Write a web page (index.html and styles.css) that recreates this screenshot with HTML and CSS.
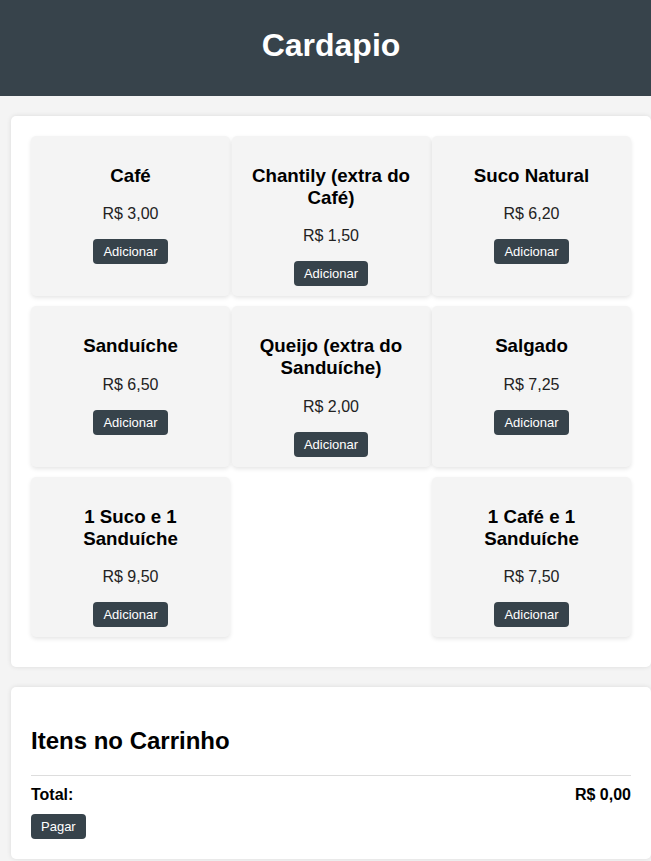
FILE: index.html
```html
<!DOCTYPE html>
<html lang="pt-BR">
<head>
<meta charset="utf-8">
<title>Cardapio</title>
<link rel="stylesheet" href="styles.css">
</head>
<body>
<div class="frame">
<header class="topbar">
  <h1 class="topbar-title">Cardapio</h1>
</header>
<main class="page">
  <section class="panel menu">
    <div class="item">
      <h3 class="item-name">Café</h3>
      <p class="item-price">R$ 3,00</p>
      <button class="btn">Adicionar</button>
    </div>
    <div class="item">
      <h3 class="item-name">Chantily (extra do Café)</h3>
      <p class="item-price">R$ 1,50</p>
      <button class="btn">Adicionar</button>
    </div>
    <div class="item">
      <h3 class="item-name">Suco Natural</h3>
      <p class="item-price">R$ 6,20</p>
      <button class="btn">Adicionar</button>
    </div>
    <div class="item">
      <h3 class="item-name">Sanduíche</h3>
      <p class="item-price">R$ 6,50</p>
      <button class="btn">Adicionar</button>
    </div>
    <div class="item">
      <h3 class="item-name">Queijo (extra do Sanduíche)</h3>
      <p class="item-price">R$ 2,00</p>
      <button class="btn">Adicionar</button>
    </div>
    <div class="item">
      <h3 class="item-name">Salgado</h3>
      <p class="item-price">R$ 7,25</p>
      <button class="btn">Adicionar</button>
    </div>
    <div class="item">
      <h3 class="item-name">1 Suco e 1 Sanduíche</h3>
      <p class="item-price">R$ 9,50</p>
      <button class="btn">Adicionar</button>
    </div>
    <div class="item">
      <h3 class="item-name">1 Café e 1 Sanduíche</h3>
      <p class="item-price">R$ 7,50</p>
      <button class="btn">Adicionar</button>
    </div>
  </section>
  <section class="panel cart">
    <h2 class="cart-title">Itens no Carrinho</h2>
    <div class="cart-total">
      <span>Total:</span>
      <span>R$ 0,00</span>
    </div>
    <button class="btn">Pagar</button>
  </section>
</main>
</div>
</body>
</html>
```
FILE: styles.css
```css
* { box-sizing: border-box; }
html, body { margin: 0; padding: 0; }
body {
  background: #f4f4f4;
  font-family: "Liberation Sans", Arial, sans-serif;
  color: #000;
  overflow: hidden;
}
.frame {
  width: 662px;
}
.topbar {
  background: #37434b;
  height: 96px;
  display: flex;
  align-items: center;
  justify-content: center;
}
.topbar-title {
  margin: 0;
  color: #fff;
  font-size: 32px;
  font-weight: bold;
  position: relative;
  top: -3px;
}
.page {
  padding: 20px 11px 0;
}
.panel {
  width: 640px;
  background: #fff;
  border-radius: 5px;
  box-shadow: 0 0 5px rgba(0, 0, 0, 0.1);
  padding: 20px;
  margin-bottom: 20px;
}
.menu {
  display: flex;
  flex-wrap: wrap;
  justify-content: space-between;
  padding-bottom: 20px;
}
.item {
  width: 199px;
  background: #f4f4f4;
  border-radius: 5px;
  box-shadow: 0 2px 4px rgba(0, 0, 0, 0.1);
  padding: 10px 20px;
  margin-bottom: 10px;
  text-align: center;
}
.item-name {
  font-size: 18.72px;
  margin: 18.72px 0;
  font-weight: bold;
  color: #000;
}
.item-price {
  font-size: 16px;
  margin: 16px 0;
  color: #222;
}
.btn {
  background: #37434b;
  color: #fff;
  border: none;
  border-radius: 4px;
  font-family: "Liberation Sans", Arial, sans-serif;
  font-size: 13px;
  line-height: 15px;
  padding: 5px 10px;
  cursor: pointer;
}
.cart { padding-bottom: 20px; }
.cart-title {
  font-size: 24px;
  margin: 20px 0;
  font-weight: bold;
}
.cart-total {
  display: flex;
  justify-content: space-between;
  border-top: 1px solid #ddd;
  padding: 10px 0 10px;
  font-weight: bold;
  font-size: 16px;
}
```
